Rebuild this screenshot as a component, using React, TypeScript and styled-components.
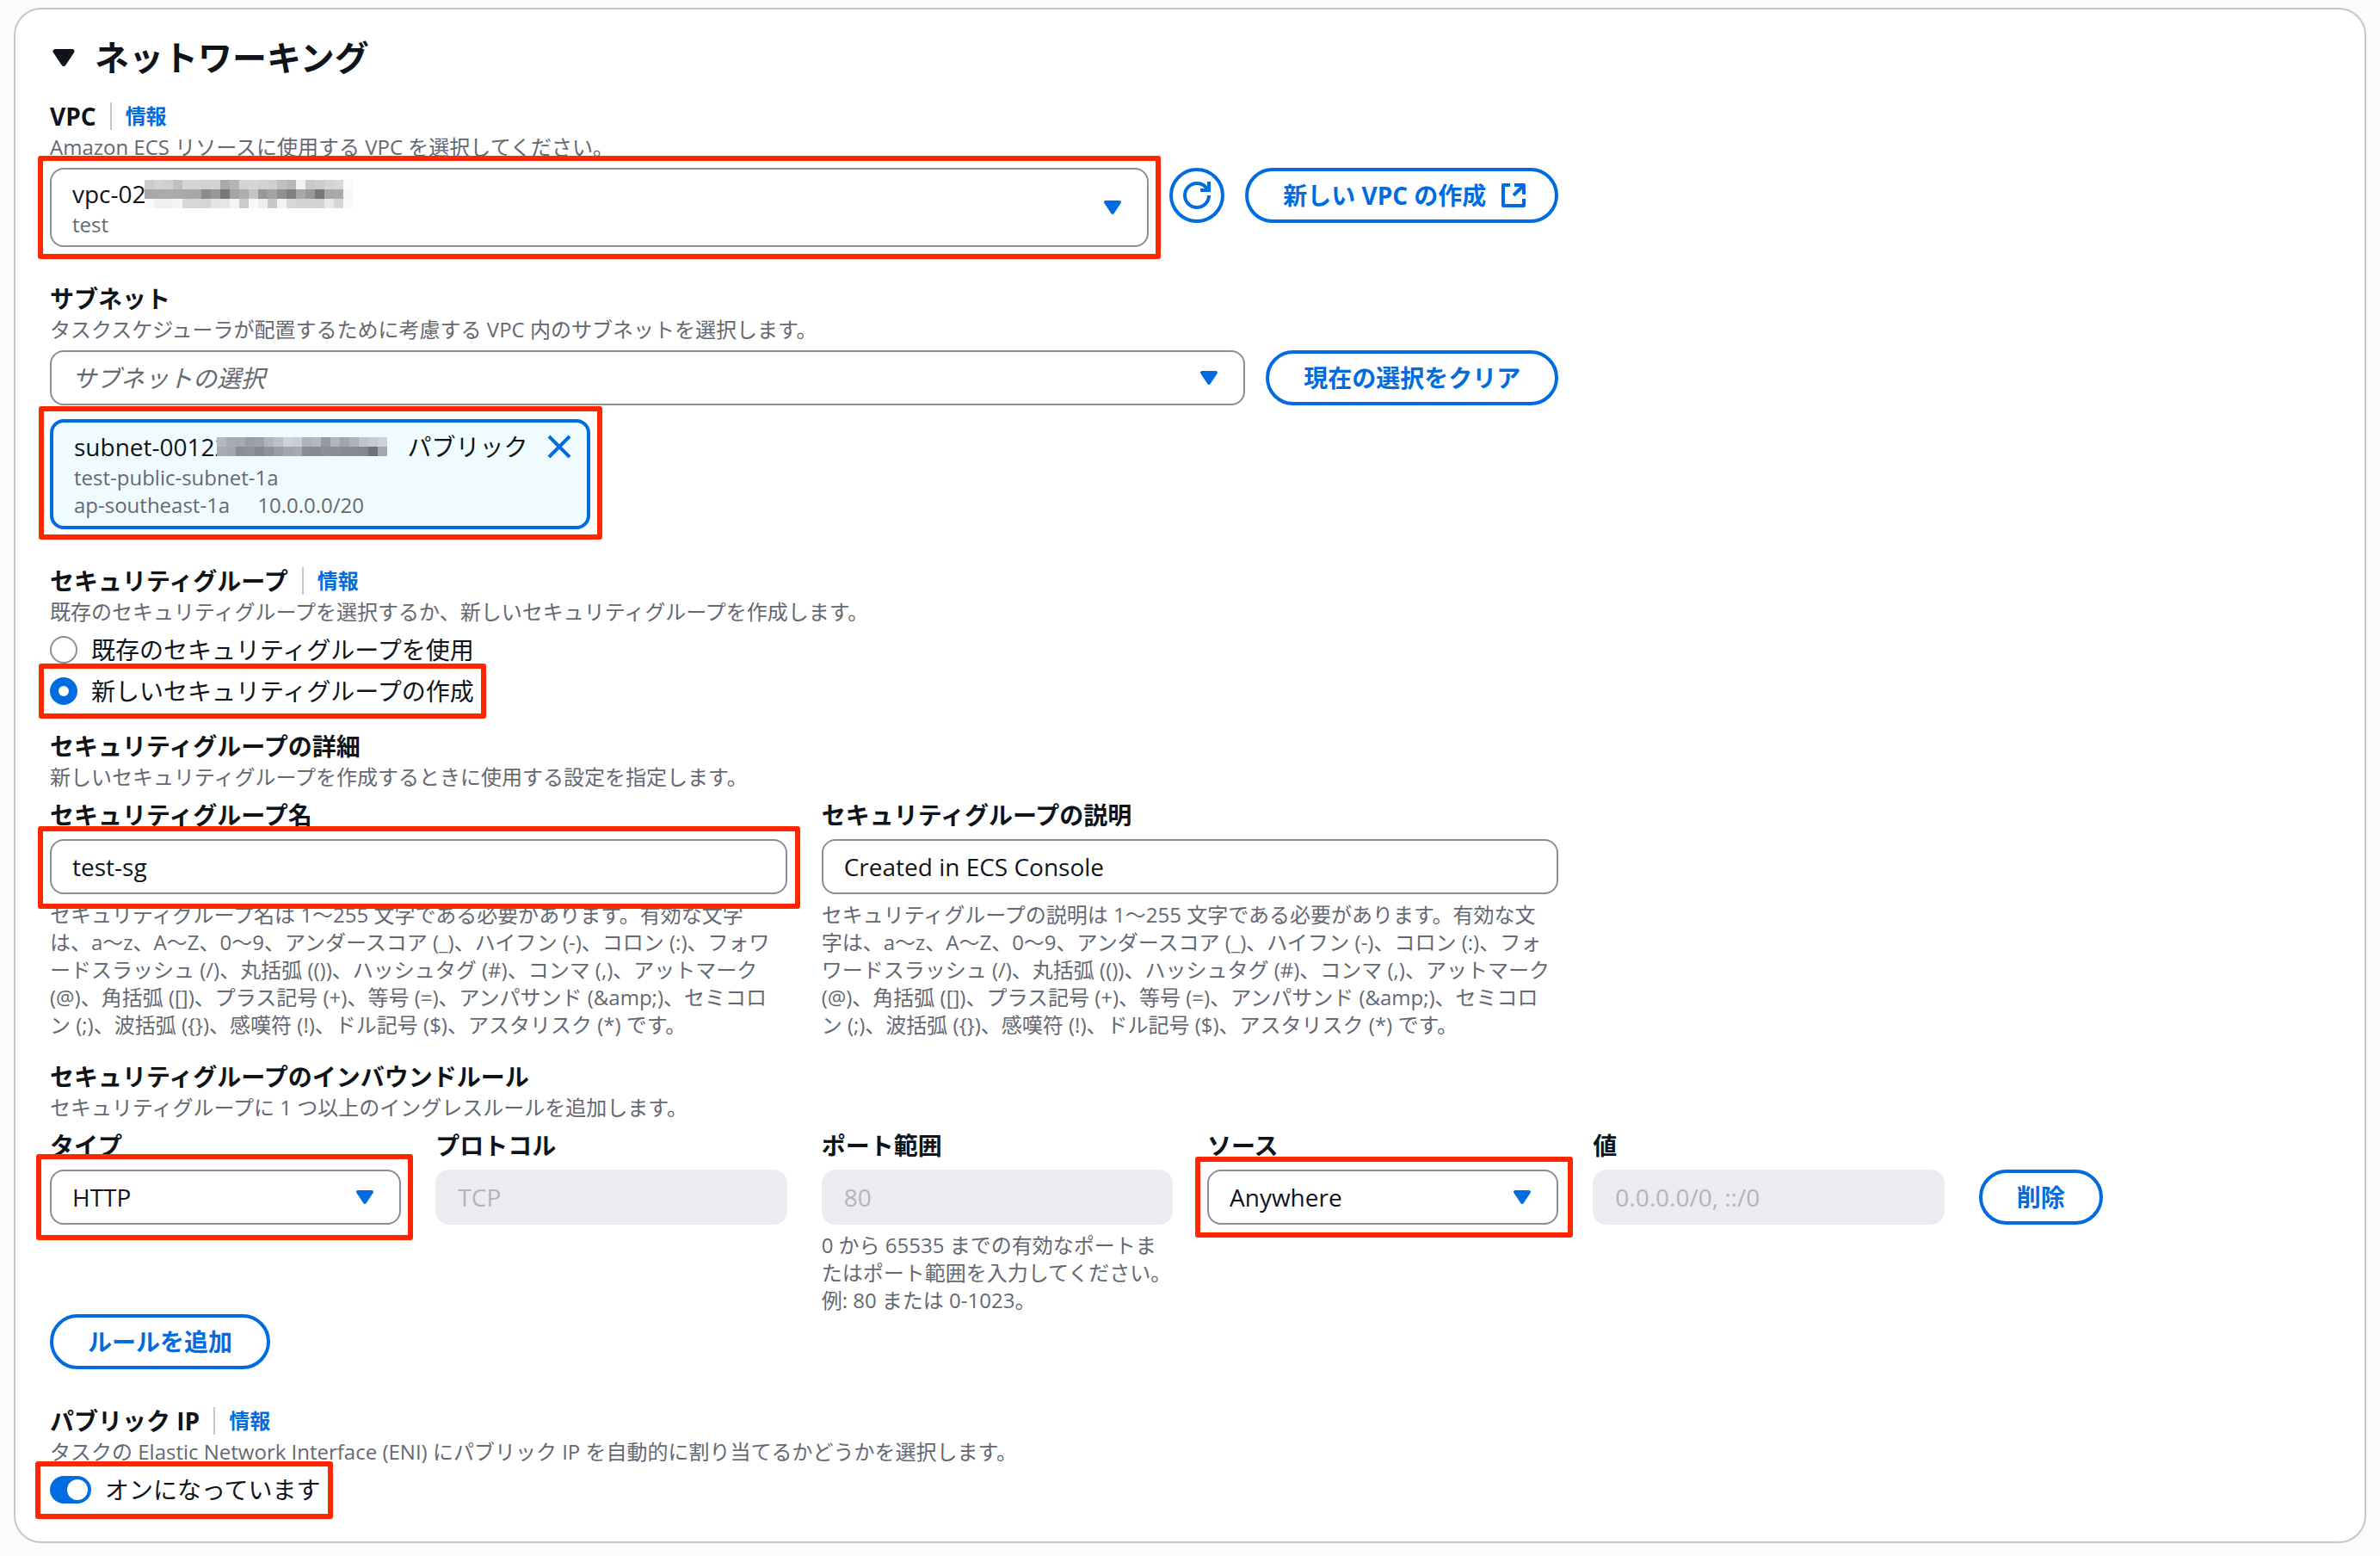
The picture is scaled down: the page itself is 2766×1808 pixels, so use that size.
import React, { useState } from "react";
import styled, { createGlobalStyle } from "styled-components";

const color = {
  page: "#fbfbfe",
  card: "#ffffff",
  cardBorder: "#c6c6cd",
  fieldBorder: "#8c8c94",
  text: "#0f141a",
  muted: "#656871",
  disabledText: "#b4b4bb",
  disabledBg: "#ebebf0",
  accent: "#006ce0",
  tokenBg: "#f0fbff",
  marker: "#ff2600",
};

const GlobalStyle = createGlobalStyle`
  *, *::before, *::after { box-sizing: border-box; }
  body {
    margin: 0;
    background: ${color.page};
    color: ${color.text};
    font-family: "Open Sans", "Noto Sans CJK JP", sans-serif;
    font-size: 28px;
    line-height: 40px;
    text-spacing-trim: space-all;
  }
  button, input, select { font: inherit; color: inherit; margin: 0; }
`;

/* ---------- layout ---------- */

const Page = styled.main`
  padding: 9px 16px 15px;
`;

const Card = styled.section`
  background: ${color.card};
  border: 2px solid ${color.cardBorder};
  border-radius: 32px;
  padding: 32px 40px 40px;
`;

const Header = styled.header`
  display: flex;
  align-items: center;
  margin-bottom: 24px;
`;

const Toggler = styled.button`
  display: flex;
  align-items: center;
  gap: 16px;
  padding: 0;
  margin-left: -4px;
  border: 0;
  background: none;
  font-size: 40px;
  font-weight: 700;
  line-height: 48px;
`;

const Title = styled.h2`
  margin: 0;
  font: inherit;
`;

const Sections = styled.div`
  display: flex;
  flex-direction: column;
  gap: 40px;
`;

const Stack = styled.div<{ $gap: number }>`
  display: flex;
  flex-direction: column;
  gap: ${(p) => p.$gap}px;
  min-width: 0;
`;

const Grid = styled.div`
  display: grid;
  grid-template-columns: repeat(6, minmax(0, 1fr));
  column-gap: 40px;
  align-items: start;
`;

const Cell = styled.div<{ $span: number }>`
  grid-column: span ${(p) => p.$span};
  min-width: 0;
`;

const ControlRow = styled.div`
  display: flex;
  align-items: flex-start;
  gap: 24px;
`;

const Grow = styled.div`
  flex: 1;
  min-width: 0;
`;

const ActionCell = styled.div`
  padding-top: 48px;
`;

/* ---------- text ---------- */

const LabelRow = styled.div`
  display: flex;
  align-items: center;
  gap: 16px;
`;

const Label = styled.label`
  font-weight: 700;
`;

const GroupTitle = styled.div`
  font-weight: 700;
`;

const InfoLink = styled.a`
  border-left: 2px solid ${color.cardBorder};
  padding-left: 16px;
  font-size: 24px;
  line-height: 32px;
  font-weight: 700;
  color: ${color.accent};
  text-decoration: none;
`;

const Hint = styled.div`
  font-size: 24px;
  line-height: 32px;
  color: ${color.muted};
`;

const Constraint = styled(Hint)`
  padding-right: 4px;
`;

/* ---------- controls ---------- */

const Marked = styled.div<{ $inset?: string; $inline?: boolean }>`
  position: relative;
  width: ${(p) => (p.$inline ? "fit-content" : "auto")};
  &::after {
    content: "";
    display: ${(p) => (p.$inset ? "block" : "none")};
    position: absolute;
    inset: ${(p) => p.$inset ?? "0"};
    border: 6px solid ${color.marker};
    border-radius: 3px;
    pointer-events: none;
  }
`;

const TextField = styled.input`
  display: block;
  width: 100%;
  height: 64px;
  padding: 0 24px;
  border: 2px solid ${color.fieldBorder};
  border-radius: 16px;
  background: ${color.card};
  &:disabled {
    border-color: ${color.disabledBg};
    background: ${color.disabledBg};
    color: ${color.disabledText};
  }
`;

const SelectFrame = styled.div`
  position: relative;
`;

const SelectField = styled.select<{ $placeholder?: boolean; $twoLine?: boolean }>`
  display: block;
  appearance: none;
  width: 100%;
  height: ${(p) => (p.$twoLine ? 92 : 64)}px;
  padding: ${(p) => (p.$twoLine ? "8px 64px 40px 24px" : "0 64px 0 24px")};
  border: 2px solid ${color.fieldBorder};
  border-radius: 16px;
  background: ${color.card};
  font-style: ${(p) => (p.$placeholder ? "italic" : "normal")};
  color: ${(p) => (p.$placeholder ? color.muted : color.text)};
`;

const SelectArrow = styled.span`
  position: absolute;
  top: 0;
  bottom: 0;
  right: 26px;
  display: flex;
  align-items: center;
  color: ${color.accent};
  pointer-events: none;
`;

const SelectSubText = styled.span`
  position: absolute;
  left: 26px;
  bottom: 10px;
  font-size: 24px;
  line-height: 32px;
  color: ${color.muted};
  pointer-events: none;
`;

const SelectMask = styled.span`
  position: absolute;
  left: 110px;
  top: 14px;
  display: flex;
  pointer-events: none;
`;

const PillButton = styled.button<{ $withIcon?: boolean }>`
  display: inline-flex;
  align-items: center;
  gap: 16px;
  height: 64px;
  padding: ${(p) => (p.$withIcon ? "0 32px 0 40px" : "0 40px")};
  border: 4px solid ${color.accent};
  border-radius: 32px;
  background: ${color.card};
  color: ${color.accent};
  font-weight: 700;
  white-space: nowrap;
`;

const RoundButton = styled(PillButton)`
  justify-content: center;
  width: 64px;
  padding: 0;
`;

const Choice = styled.label`
  display: flex;
  align-items: center;
  gap: 16px;
  width: fit-content;
`;

const Radio = styled.input`
  appearance: none;
  width: 32px;
  height: 32px;
  border: 2px solid ${color.fieldBorder};
  border-radius: 50%;
  background: ${color.card};
  &:checked {
    border: 10px solid ${color.accent};
  }
`;

const Switch = styled.input`
  appearance: none;
  display: flex;
  align-items: center;
  width: 48px;
  height: 32px;
  padding: 0 4px;
  border-radius: 16px;
  background: ${color.fieldBorder};
  &::before {
    content: "";
    width: 24px;
    height: 24px;
    border-radius: 50%;
    background: ${color.card};
  }
  &:checked {
    justify-content: flex-end;
    background: ${color.accent};
  }
`;

/* ---------- selected subnet token ---------- */

const Token = styled.div`
  display: flex;
  align-items: flex-start;
  gap: 20px;
  width: fit-content;
  padding: 8px 16px 8px 24px;
  border: 4px solid ${color.accent};
  border-radius: 16px;
  background: ${color.tokenBg};
`;

const TokenHead = styled.div`
  display: flex;
  gap: 24px;
`;

const TokenId = styled.span`
  display: flex;
  align-items: center;
  svg { margin-left: -14px; }
`;

const TokenMeta = styled(Hint)`
  display: flex;
  gap: 32px;
`;

const TokenClose = styled.button`
  display: flex;
  align-items: center;
  height: 40px;
  padding: 0;
  border: 0;
  background: none;
  color: ${color.accent};
`;

/* ---------- drawings ---------- */

const Caret = ({ size = 32 }: { size?: number }) => (
  <svg width={size} height={size} viewBox="0 0 16 16" fill="currentColor" stroke="currentColor" strokeWidth="2" strokeLinejoin="round" aria-hidden>
    <path d="M4 5h8l-4 6z" />
  </svg>
);

const RefreshIcon = () => (
  <svg width="32" height="32" viewBox="0 0 16 16" fill="none" stroke="currentColor" strokeWidth="2" overflow="visible" aria-hidden>
    <path d="M15 8c0 3.87-3.13 7-7 7s-7-3.13-7-7 3.13-7 7-7c2.79 0 5.2 1.63 6.33 4" />
    <path d="M10 5h5V0" />
  </svg>
);

const ExternalIcon = () => (
  <svg width="32" height="32" viewBox="0 0 16 16" fill="none" stroke="currentColor" strokeWidth="2" strokeLinejoin="round" aria-hidden>
    <path d="M6 2H2v12h12v-4" />
    <path d="M8.5 2H14v5.5M14 2 8 8" />
  </svg>
);

const CloseIcon = () => (
  <svg width="32" height="32" viewBox="0 0 16 16" fill="none" stroke="currentColor" strokeWidth="2" aria-hidden>
    <path d="m2 2 12 12M14 2 2 14" />
  </svg>
);

const vpcMask = [
  "cc d3 d0 c0 d6 d4 d2 d2 aa b4 d4 d6 d2 d0 c0 b8 f2 c8 cc d4 d8 fa",
  "a8 aa ac aa a8 a6 8c 98 78 a4 ae c4 98 a4 90 80 a8 98 78 a8 aa f6",
  "fa f0 f0 f4 d8 d8 d6 e4 e6 f4 cc f8 ee c8 f2 d8 d4 d4 d2 e8 d6 fa",
];

const subnetMask = [
  "b6 aa a8 9c a0 b4 be d0 cc b0 b6 98 b4 a4 b0 c2 c8 d0",
  "aa a6 8c 90 86 90 9c a4 a8 8a 88 8e 8c 8a 88 86 70 a8",
];

const Mask = ({ rows, cool }: { rows: string[]; cool?: boolean }) => {
  const columns = rows[0].split(" ").length;
  return (
    <svg width={columns * 11} height={rows.length * 11} shapeRendering="crispEdges" aria-hidden>
      {rows.map((row, y) =>
        row.split(" ").map((shade, x) => {
          const v = parseInt(shade, 16);
          const fill = cool ? `rgb(${v - 4},${v + 2},${v + 8})` : `rgb(${v},${v},${v + 2})`;
          return <rect key={`${x}-${y}`} x={x * 11} y={y * 11} width="11" height="11" fill={fill} />;
        })
      )}
    </svg>
  );
};

/* ---------- form pieces ---------- */

type SelectProps = {
  id: string;
  value: string;
  mark?: string;
  placeholder?: boolean;
};

const Select = ({ id, value, mark, placeholder }: SelectProps) => (
  <Marked $inset={mark}>
    <SelectFrame>
      <SelectField id={id} defaultValue={value} $placeholder={placeholder}>
        <option>{value}</option>
      </SelectField>
      <SelectArrow><Caret /></SelectArrow>
    </SelectFrame>
  </Marked>
);

const DisabledField = ({ id, label, value, hint }: { id: string; label: string; value: string; hint?: string }) => (
  <Stack $gap={8}>
    <Label htmlFor={id}>{label}</Label>
    <TextField id={id} value={value} disabled readOnly />
    {hint && <Hint>{hint}</Hint>}
  </Stack>
);

const allowed = (subject: string) =>
  `${subject}は 1〜255 文字である必要があります。有効な文字は、a〜z、A〜Z、0〜9、アンダースコア (_)、ハイフン (-)、コロン (:)、フォワードスラッシュ (/)、丸括弧 (())、ハッシュタグ (#)、コンマ (,)、アットマーク (@)、角括弧 ([])、プラス記号 (+)、等号 (=)、アンパサンド (&amp;)、セミコロン (;)、波括弧 ({})、感嘆符 (!)、ドル記号 ($)、アスタリスク (*) です。`;

export default function App() {
  const [mode, setMode] = useState("new");
  const [publicIp, setPublicIp] = useState(true);
  const [name, setName] = useState("test-sg");
  const [description, setDescription] = useState("Created in ECS Console");

  return (
    <>
      <GlobalStyle />
      <Page lang="ja">
        <Card>
          <Header>
            <Toggler type="button" aria-expanded="true">
              <Caret size={40} />
              <Title>ネットワーキング</Title>
            </Toggler>
          </Header>

          <Sections>
            <Grid>
              <Cell $span={4}>
                <LabelRow>
                  <Label htmlFor="vpc">VPC</Label>
                  <InfoLink href="#vpc-info">情報</InfoLink>
                </LabelRow>
                <Stack $gap={8}>
                  <Hint>Amazon ECS リソースに使用する VPC を選択してください。</Hint>
                  <ControlRow>
                    <Grow>
                      <Marked $inset="-14px">
                        <SelectFrame>
                          <SelectField id="vpc" $twoLine defaultValue="vpc-02">
                            <option>vpc-02</option>
                          </SelectField>
                          <SelectMask><Mask rows={vpcMask} /></SelectMask>
                          <SelectSubText>test</SelectSubText>
                          <SelectArrow><Caret /></SelectArrow>
                        </SelectFrame>
                      </Marked>
                    </Grow>
                    <RoundButton type="button" aria-label="更新"><RefreshIcon /></RoundButton>
                    <PillButton type="button" $withIcon>
                      新しい VPC の作成
                      <ExternalIcon />
                    </PillButton>
                  </ControlRow>
                </Stack>
              </Cell>
            </Grid>

            <Grid>
              <Cell $span={4}>
                <Label htmlFor="subnet">サブネット</Label>
                <Stack $gap={8}>
                  <Hint>タスクスケジューラが配置するために考慮する VPC 内のサブネットを選択します。</Hint>
                  <Stack $gap={16}>
                    <ControlRow>
                      <Grow><Select id="subnet" value="サブネットの選択" placeholder /></Grow>
                      <PillButton type="button">現在の選択をクリア</PillButton>
                    </ControlRow>
                    <Marked $inline $inset="-15px -14px -12px -13px">
                      <Token>
                        <div>
                          <TokenHead>
                            <TokenId>subnet-00122<Mask rows={subnetMask} cool /></TokenId>
                            <span>パブリック</span>
                          </TokenHead>
                          <Hint>test-public-subnet-1a</Hint>
                          <TokenMeta><span>ap-southeast-1a</span><span>10.0.0.0/20</span></TokenMeta>
                        </div>
                        <TokenClose type="button" aria-label="削除"><CloseIcon /></TokenClose>
                      </Token>
                    </Marked>
                  </Stack>
                </Stack>
              </Cell>
            </Grid>

            <Stack $gap={24}>
              <div role="radiogroup" aria-labelledby="sg-title">
                <LabelRow>
                  <GroupTitle id="sg-title">セキュリティグループ</GroupTitle>
                  <InfoLink href="#sg-info">情報</InfoLink>
                </LabelRow>
                <Stack $gap={8}>
                  <Hint>既存のセキュリティグループを選択するか、新しいセキュリティグループを作成します。</Hint>
                  <Choice>
                    <Radio type="radio" name="sg" checked={mode === "existing"} onChange={() => setMode("existing")} />
                    既存のセキュリティグループを使用
                  </Choice>
                  <Marked $inline $inset="-12px -14px -12px -13px">
                    <Choice>
                      <Radio type="radio" name="sg" checked={mode === "new"} onChange={() => setMode("new")} />
                      新しいセキュリティグループの作成
                    </Choice>
                  </Marked>
                </Stack>
              </div>

              <div>
                <GroupTitle>セキュリティグループの詳細</GroupTitle>
                <Stack $gap={8}>
                  <Hint>新しいセキュリティグループを作成するときに使用する設定を指定します。</Hint>
                  <Grid>
                    <Cell $span={2}>
                      <Stack $gap={8}>
                        <Label htmlFor="sg-name">セキュリティグループ名</Label>
                        <Marked $inset="-15px -15px -17px -14px">
                          <TextField id="sg-name" value={name} onChange={(e) => setName(e.target.value)} />
                        </Marked>
                        <Constraint>{allowed("セキュリティグループ名")}</Constraint>
                      </Stack>
                    </Cell>
                    <Cell $span={2}>
                      <Stack $gap={8}>
                        <Label htmlFor="sg-description">セキュリティグループの説明</Label>
                        <TextField id="sg-description" value={description} onChange={(e) => setDescription(e.target.value)} />
                        <Constraint>{allowed("セキュリティグループの説明")}</Constraint>
                      </Stack>
                    </Cell>
                  </Grid>
                </Stack>
              </div>

              <div>
                <GroupTitle>セキュリティグループのインバウンドルール</GroupTitle>
                <Stack $gap={8}>
                  <Hint>セキュリティグループに 1 つ以上のイングレスルールを追加します。</Hint>
                  <Grid>
                    <Stack $gap={8}>
                      <Label htmlFor="rule-type">タイプ</Label>
                      <Select id="rule-type" value="HTTP" mark="-18px -14px -18px -16px" />
                    </Stack>
                    <DisabledField id="rule-protocol" label="プロトコル" value="TCP" />
                    <DisabledField
                      id="rule-port"
                      label="ポート範囲"
                      value="80"
                      hint="0 から 65535 までの有効なポートまたはポート範囲を入力してください。例: 80 または 0-1023。"
                    />
                    <Stack $gap={8}>
                      <Label htmlFor="rule-source">ソース</Label>
                      <Select id="rule-source" value="Anywhere" mark="-15px -17px -15px -14px" />
                    </Stack>
                    <DisabledField id="rule-value" label="値" value="0.0.0.0/0, ::/0" />
                    <ActionCell>
                      <PillButton type="button">削除</PillButton>
                    </ActionCell>
                  </Grid>
                </Stack>
                <PillButton type="button">ルールを追加</PillButton>
              </div>
            </Stack>

            <div>
              <LabelRow>
                <GroupTitle>パブリック IP</GroupTitle>
                <InfoLink href="#ip-info">情報</InfoLink>
              </LabelRow>
              <Stack $gap={8}>
                <Hint>タスクの Elastic Network Interface (ENI) にパブリック IP を自動的に割り当てるかどうかを選択します。</Hint>
                <Marked $inline $inset="-13px -14px -14px -17px">
                  <Choice>
                    <Switch type="checkbox" role="switch" checked={publicIp} onChange={(e) => setPublicIp(e.target.checked)} />
                    オンになっています
                  </Choice>
                </Marked>
              </Stack>
            </div>
          </Sections>
        </Card>
      </Page>
    </>
  );
}
